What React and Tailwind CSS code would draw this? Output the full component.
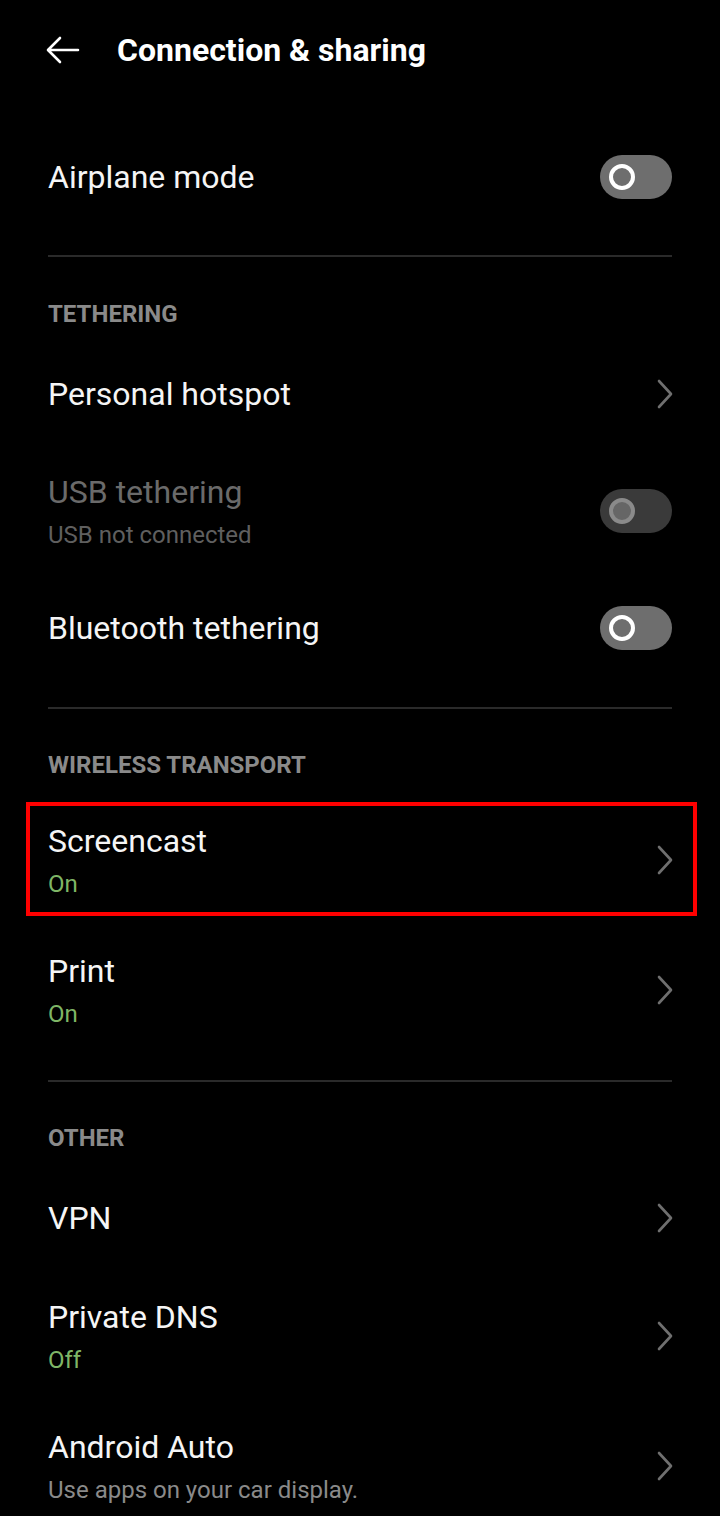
import React from "react";

const font = { fontFamily: "Roboto, 'Noto Sans', sans-serif" };

function Toggle({ disabled }) {
  return (
    <div
      className={`w-[72px] h-[44px] rounded-full flex items-center pl-[9px] ${
        disabled ? "bg-[#3a3a3a]" : "bg-[#6e6e6e]"
      }`}
    >
      <div
        className={`w-[26px] h-[26px] rounded-full border-[4px] ${
          disabled ? "border-[#8a8a8a] bg-[#666666]" : "border-white bg-[#6e6e6e]"
        }`}
      />
    </div>
  );
}

function Chevron() {
  return (
    <svg width="16" height="30" viewBox="0 0 16 30" className="mr-[-1px]">
      <path d="M2 2 L14 15 L2 28" fill="none" stroke="#6f6f6f" strokeWidth="2.6" strokeLinecap="round" strokeLinejoin="round" />
    </svg>
  );
}

function Row({ title, sub, subColor, right, h = 106, disabled }) {
  return (
    <div className="flex items-center justify-between" style={{ height: h }}>
      <div className="flex flex-col">
        <div
          className={`text-[32px] leading-[40px] ${disabled ? "text-[#6a6a6a]" : "text-[#f5f5f5]"}`}
        >
          {title}
        </div>
        {sub && (
          <div className={`text-[24px] leading-[30px] mt-[8px] ${subColor}`}>{sub}</div>
        )}
      </div>
      {right}
    </div>
  );
}

function Label({ children, h, pb }) {
  return (
    <div className="flex items-end" style={{ height: h, paddingBottom: pb }}>
      <div className="text-[24px] leading-[24px] font-bold text-[#8a8a8a]">{children}</div>
    </div>
  );
}

function Sep({ mt }) {
  return <div className="h-[2px] bg-[#2a2a2a]" style={{ marginTop: mt }} />;
}

export default function App() {
  return (
    <div className="w-[720px] h-[1516px] bg-black overflow-hidden" style={font}>
      <div className="h-[100px] flex items-center pl-[46px]">
        <svg width="34" height="28" viewBox="0 0 34 28">
          <path d="M32 14 H3 M14 2 L2 14 L14 26" fill="none" stroke="#ffffff" strokeWidth="2.6" strokeLinecap="round" strokeLinejoin="round" />
        </svg>
        <div className="ml-[37px] text-[32px] font-bold text-white leading-[40px]">Connection &amp; sharing</div>
      </div>
      <div className="px-[48px]">
        <div className="mt-[24px]">
          <Row title="Airplane mode" right={<Toggle />} />
        </div>
        <Sep mt={25} />
        <Label h={85} pb={16}>TETHERING</Label>
        <Row title="Personal hotspot" h={104} right={<Chevron />} />
        <Row
          title="USB tethering"
          sub="USB not connected"
          subColor="text-[#5f5f5f]"
          h={130}
          disabled
          right={<Toggle disabled />}
        />
        <Row title="Bluetooth tethering" h={104} right={<Toggle />} />
        <Sep mt={27} />
        <Label h={86} pb={18}>WIRELESS TRANSPORT</Label>
        <div className="relative">
          <div className="absolute left-[-22px] right-[-25px] top-[7px] bottom-[9px] border-[4px] border-[#ff0000] pointer-events-none" />
          <Row title="Screencast" sub="On" subColor="text-[#7fb666]" h={130} right={<Chevron />} />
        </div>
        <Row title="Print" sub="On" subColor="text-[#7fb666]" h={130} right={<Chevron />} />
        <Sep mt={25} />
        <Label h={83} pb={15}>OTHER</Label>
        <Row title="VPN" h={106} right={<Chevron />} />
        <Row title="Private DNS" sub="Off" subColor="text-[#7fb666]" h={130} right={<Chevron />} />
        <Row
          title="Android Auto"
          sub="Use apps on your car display."
          subColor="text-[#8a8a8a]"
          h={130}
          right={<Chevron />}
        />
      </div>
    </div>
  );
}
